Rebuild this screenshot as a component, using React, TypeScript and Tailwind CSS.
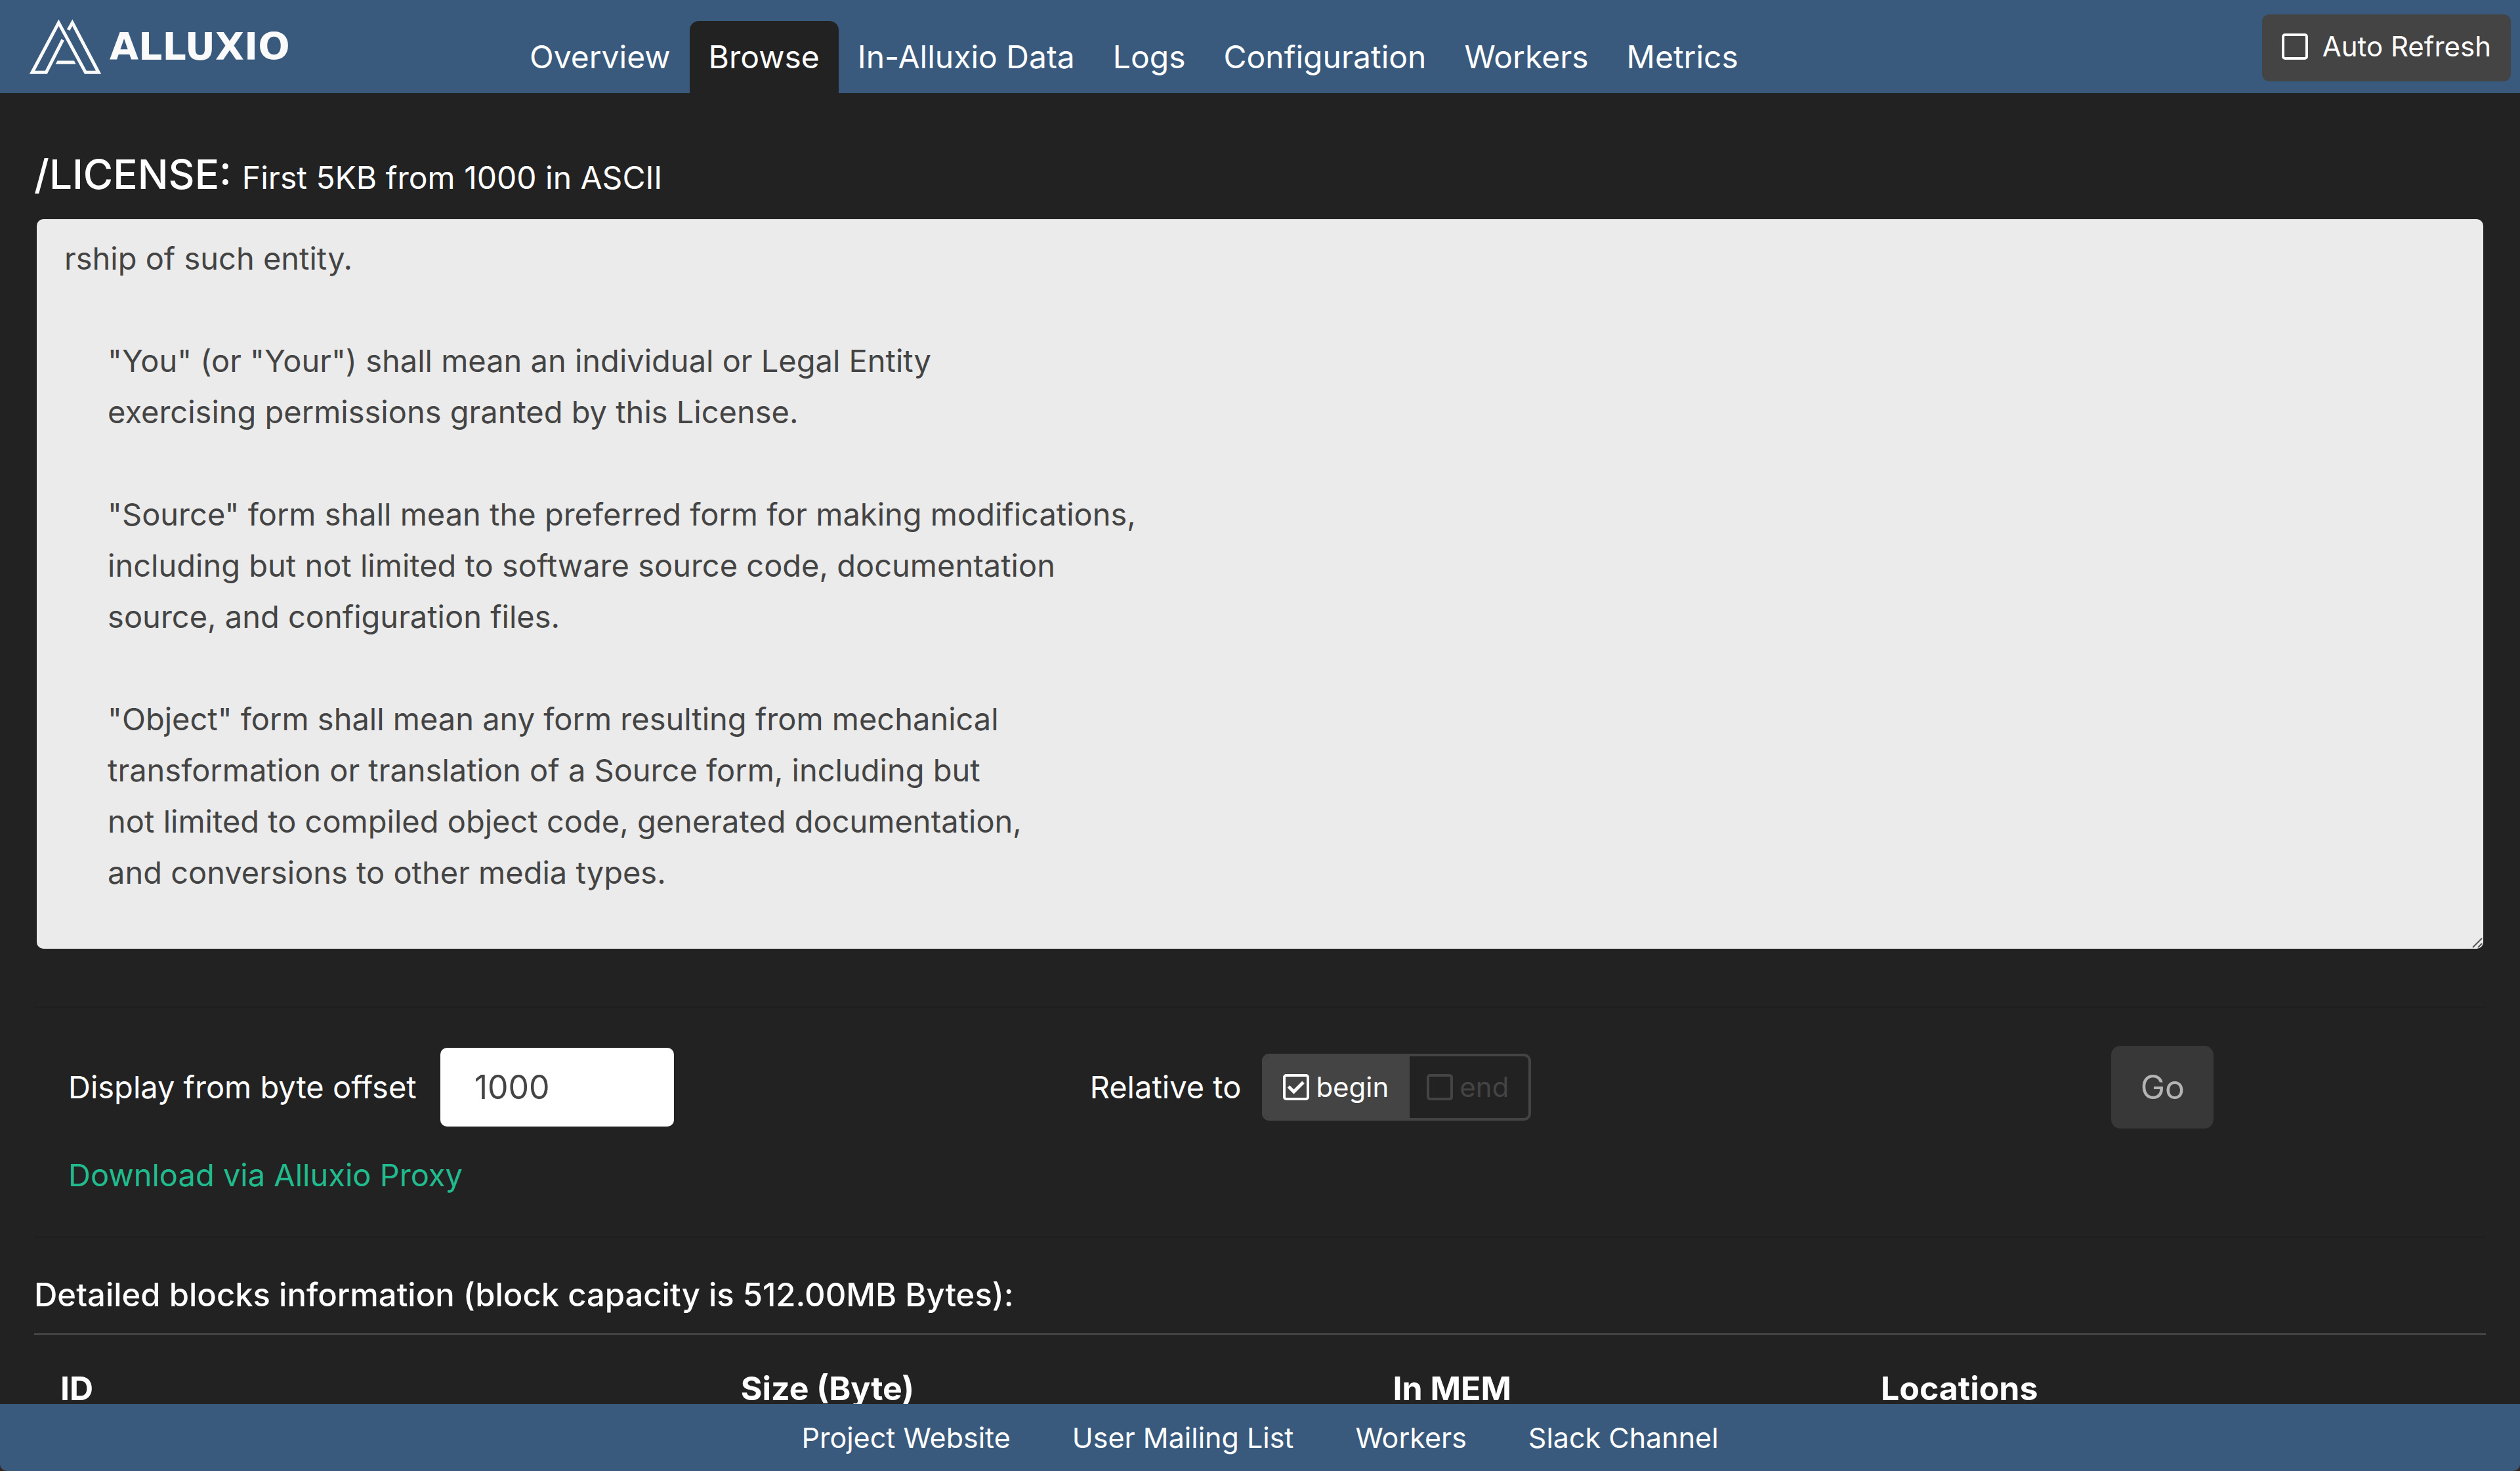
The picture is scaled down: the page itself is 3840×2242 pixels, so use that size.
import { useState } from "react";

const tabs = ["Overview", "Browse", "In-Alluxio Data", "Logs", "Configuration", "Workers", "Metrics"];
const footerLinks = ["Project Website", "User Mailing List", "Workers", "Slack Channel"];

const fileContents = `rship of such entity.

     "You" (or "Your") shall mean an individual or Legal Entity
     exercising permissions granted by this License.

     "Source" form shall mean the preferred form for making modifications,
     including but not limited to software source code, documentation
     source, and configuration files.

     "Object" form shall mean any form resulting from mechanical
     transformation or translation of a Source form, including but
     not limited to compiled object code, generated documentation,
     and conversions to other media types.
`;

function Logo() {
  return (
    <a href="#overview" className="flex items-center gap-[12px] text-[#fafafa]">
      <svg viewBox="40 56 333 253" className="h-[84px] w-[111px]" aria-hidden="true">
        <path
          d="M195 151 L118.500 301 H54.500 L176 73 L299.500 301 H359 L239 73 L220.500 106"
          fill="none"
          stroke="currentColor"
          strokeWidth="15"
          strokeMiterlimit="6"
        />
        <path d="M170 247 H247 L255 263 H162 Z" fill="currentColor" />
      </svg>
      <span className="font-['DejaVu_Sans',sans-serif] text-[57px] leading-[84px] font-bold">ALLUXIO</span>
    </a>
  );
}

function Tick({ show }: { show: boolean }) {
  return (
    <svg viewBox="0 0 40 40" className="pointer-events-none absolute inset-0 size-[40px]" aria-hidden="true">
      {show && <path d="M8.500 19 L16.500 27 L31 12.500" fill="none" stroke="currentColor" strokeWidth="5" />}
    </svg>
  );
}

function AutoRefresh() {
  const [on, setOn] = useState(false);
  return (
    <label className="flex h-[102px] items-center gap-[22px] rounded-[11px] bg-[#444] pr-[30px] pb-[4px] pl-[30px] text-[42px]">
      <span className="relative flex size-[40px]">
        <input
          type="checkbox"
          checked={on}
          onChange={() => setOn(!on)}
          className="size-[40px] appearance-none rounded-[5px] border-4 border-white"
        />
        <Tick show={on} />
      </span>
      Auto Refresh
    </label>
  );
}

function RelativeTo() {
  const [value, setValue] = useState("begin");
  return (
    <fieldset className="flex items-center gap-[32px]" aria-label="Relative to">
      <span>Relative to</span>
      <div className="flex h-[102px] overflow-hidden rounded-[11px] border-4 border-[#444] text-[42px]">
        {["begin", "end"].map((option) => {
          const active = option === value;
          return (
            <label
              key={option}
              className={
                active
                  ? "flex items-center gap-[10px] bg-[#444] pr-[32px] pl-[28px] text-white"
                  : "flex items-center gap-[10px] pr-[30px] pl-[26px] text-[#444]"
              }
            >
              <span className="relative flex size-[40px]">
                <input
                  type="radio"
                  name="relativeTo"
                  checked={active}
                  onChange={() => setValue(option)}
                  className="size-[40px] appearance-none rounded-[5px] border-4 border-current"
                />
                <Tick show={active} />
              </span>
              {option}
            </label>
          );
        })}
      </div>
    </fieldset>
  );
}

export default function App() {
  return (
    <div className="bg-[#3b2318]">
      <div className="flex h-screen flex-col overflow-hidden rounded-b-[10px] bg-[#222] font-['Inter',sans-serif] text-[47px] leading-[78px] text-white">
        <header className="flex h-[142px] shrink-0 items-end bg-[#395a7d]">
          <div className="w-[778px] shrink-0 self-center pl-[44px]">
            <Logo />
          </div>
          <nav className="flex text-[48px]">
            {tabs.map((tab) => (
              <a
                key={tab}
                href="#tab"
                className={
                  tab === "Browse"
                    ? "rounded-t-[14px] bg-[#222] px-[29px] py-[16px]"
                    : "px-[29px] py-[16px]"
                }
              >
                {tab}
              </a>
            ))}
          </nav>
          <div className="mr-[14px] ml-auto self-center pt-[4px]">
            <AutoRefresh />
          </div>
        </header>

        <main className="min-h-0 flex-1 overflow-hidden px-[52px] pt-[88px]">
          <h1 className="flex items-baseline gap-[16px] text-[62px] leading-[72px] font-medium">
            /LICENSE: <small className="text-[48px] font-normal">First 5KB from 1000 in ASCII</small>
          </h1>
          <div className="relative mt-[27px] flex px-[4px]">
            <textarea
              readOnly
              aria-label="File contents"
              defaultValue={fileContents}
              className="h-[1112px] w-full resize-none rounded-[10px] bg-[#ebebeb] px-[42px] pt-[21px] text-[#444] outline-none"
            />
            <svg
              viewBox="0 0 16 16"
              className="pointer-events-none absolute right-[5px] bottom-px size-[16px]"
              aria-hidden="true"
            >
              <path d="M1 15 L15 1 M9 15 L15 9" stroke="#555" strokeWidth="2" />
            </svg>
          </div>

          <hr className="mt-[88px] border-t-3 border-[#1f1f1f]" />

          <form className="mt-[57px] grid grid-cols-[5fr_5fr_2fr] items-center" onSubmit={(e) => e.preventDefault()}>
            <div className="flex items-center gap-[36px] px-[52px]">
              <label htmlFor="offset">Display from byte offset</label>
              <input
                id="offset"
                type="text"
                defaultValue="1000"
                className="h-[120px] w-[356px] rounded-[10px] bg-white px-[52px] text-[50px] text-[#444] outline-none"
              />
            </div>
            <div className="px-[52px]">
              <RelativeTo />
            </div>
            <div className="px-[52px]">
              <button
                type="submit"
                className="flex h-[126px] w-[156px] items-center justify-center rounded-[14px] bg-[#383838] text-[50px] text-[#b4b4b4]"
              >
                Go
              </button>
            </div>
          </form>
          <div className="mt-[32px] px-[52px]">
            <a href="#download" className="text-[#21bc8e]">
              Download via Alluxio Proxy
            </a>
          </div>

          <hr className="mt-[54px] border-t-3 border-[#1f1f1f]" />

          <h2 className="mt-[56px] text-[49px] leading-[62px] font-medium">
            Detailed blocks information (block capacity is 512.00MB Bytes):
          </h2>
          <table className="mt-[27px] w-full table-fixed border-t-3 border-[#444] text-left text-[50px]">
            <thead>
              <tr>
                <th className="w-[27.75%] px-[40px] pt-[42px] pb-[40px] font-bold">ID</th>
                <th className="w-[26.6%] px-[40px] pt-[42px] pb-[40px] font-bold">Size (Byte)</th>
                <th className="w-[19.9%] px-[40px] pt-[42px] pb-[40px] font-bold">In MEM</th>
                <th className="px-[40px] pt-[42px] pb-[40px] font-bold">Locations</th>
              </tr>
            </thead>
          </table>
        </main>

        <footer className="flex h-[102px] shrink-0 items-center justify-center gap-[94px] bg-[#395a7d] text-[43px]">
          {footerLinks.map((link) => (
            <a key={link} href="#footer">
              {link}
            </a>
          ))}
        </footer>
      </div>
    </div>
  );
}
